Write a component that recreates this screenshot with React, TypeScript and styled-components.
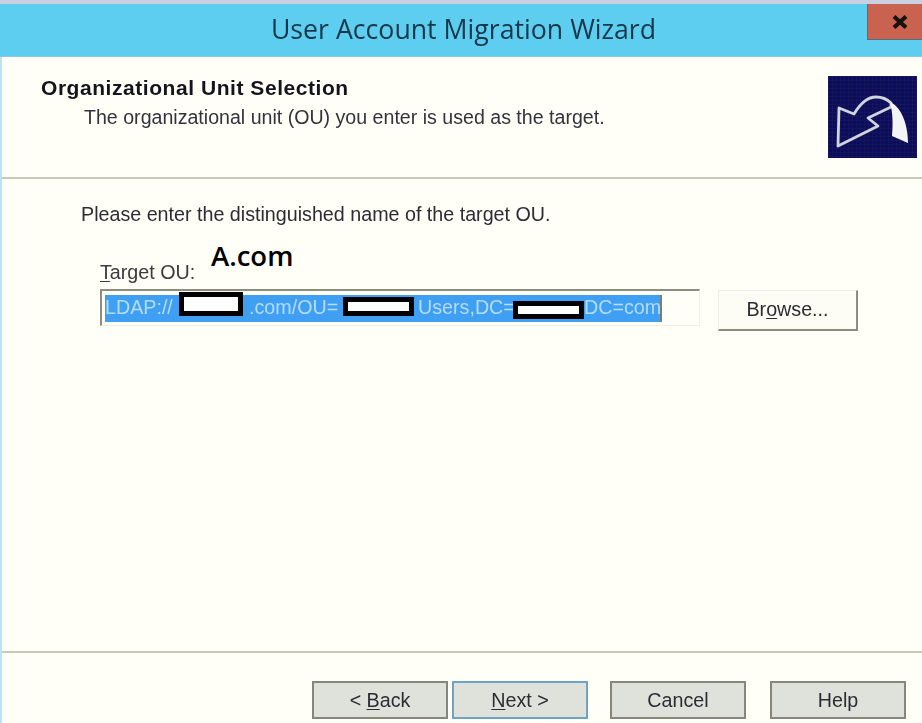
import React from "react";
import styled, { createGlobalStyle } from "styled-components";

const GlobalStyle = createGlobalStyle`
  html, body {
    margin: 0;
    padding: 0;
    background: #fffff8;
  }
  body {
    font-family: "Liberation Sans", Arial, sans-serif;
  }
`;

const Window = styled.div`
  width: 922px;
  height: 723px;
  display: flex;
  flex-direction: column;
  overflow: hidden;
  background: #fffff8;
  box-sizing: border-box;
  border-top: 4px solid #c9d0e2;
`;

const TitleBar = styled.div`
  position: relative;
  flex: 0 0 53px;
  display: flex;
  justify-content: center;
  align-items: center;
  background: #5ecef0;
  border-bottom: 1px solid #8fc6d8;
  box-sizing: border-box;
`;

const Title = styled.div`
  font-family: "Open Sans", sans-serif;
  font-size: 26.7px;
  color: #17374a;
  padding: 0 0 3px 5px;
  filter: blur(0.4px);
`;

const CloseButton = styled.div`
  position: absolute;
  top: 0;
  right: 0;
  width: 55px;
  height: 36px;
  display: flex;
  justify-content: center;
  align-items: center;
  padding-left: 10px;
  background: #c9624f;
  border-left: 1px solid #55707a;
  border-bottom: 1px solid #55707a;
  box-sizing: border-box;
`;

const Content = styled.div`
  flex: 1;
  display: flex;
  flex-direction: column;
  border-left: 2px solid #b8e4f4;
`;

const Header = styled.div`
  flex: 0 0 122px;
  display: flex;
  justify-content: space-between;
  box-sizing: border-box;
  padding: 19px 5px 0 39px;
  border-bottom: 2px solid #c8c9b9;
`;

const HeaderText = styled.div`
  display: flex;
  flex-direction: column;
`;

const Heading = styled.div`
  font-size: 21px;
  line-height: 24px;
  letter-spacing: 0.55px;
  font-weight: bold;
  color: #14141e;
  filter: blur(0.4px);
`;

const SubHeading = styled.div`
  font-size: 19.6px;
  line-height: 24px;
  margin-left: 43px;
  margin-top: 5px;
  color: #33333c;
  filter: blur(0.4px);
`;

const Emblem = styled.svg`
  width: 89px;
  height: 82px;
  display: block;
  filter: blur(0.4px);
`;

const Body = styled.div`
  flex: 1;
  display: flex;
  flex-direction: column;
  box-sizing: border-box;
  padding: 23px 0 0 79px;
`;

const Intro = styled.div`
  font-size: 19.7px;
  line-height: 24px;
  color: #2c2c34;
  filter: blur(0.4px);
`;

const Field = styled.div`
  position: relative;
  margin: 34px 0 0 19px;
`;

const FieldLabel = styled.div`
  font-size: 19.7px;
  line-height: 24px;
  color: #3a3a40;
  filter: blur(0.4px);
`;

const Underlined = styled.span`
  text-decoration: underline;
  text-underline-offset: 2px;
`;

const DomainNote = styled.div`
  position: absolute;
  left: 111px;
  top: -22px;
  font-family: "Open Sans", sans-serif;
  font-size: 27.5px;
  line-height: 36px;
  font-weight: 600;
  color: #000;
`;

const FieldRow = styled.div`
  display: flex;
  align-items: flex-start;
  margin-top: 5px;
`;

const TextBox = styled.div`
  position: relative;
  width: 600px;
  height: 37px;
  box-sizing: border-box;
  padding: 4px 0 0 3px;
  background: #fffff8;
  border: 1px solid #eeeee6;
  border-top: 2px solid #8c8c80;
  border-left: 2px solid #8c8c80;
`;

const Selection = styled.div`
  width: 557px;
  height: 27px;
  display: flex;
  box-sizing: border-box;
  background: #3f9ff2;
  border-right: 2px solid #6f7f8a;
  color: #b4dcf6;
  font-size: 19.7px;
  line-height: 25px;
  white-space: nowrap;
  filter: blur(0.3px);
`;

const Segment = styled.span<{ $width: number }>`
  flex: 0 0 ${(p) => p.$width}px;
`;

const Redaction = styled.div<{ $left: number; $top: number; $width: number; $height: number }>`
  position: absolute;
  left: ${(p) => p.$left}px;
  top: ${(p) => p.$top}px;
  width: ${(p) => p.$width}px;
  height: ${(p) => p.$height}px;
  box-sizing: border-box;
  background: #fff;
  border: 5px solid #000;
`;

const BrowseButton = styled.div`
  width: 140px;
  height: 41px;
  margin: 1px 0 0 18px;
  display: flex;
  justify-content: center;
  align-items: center;
  box-sizing: border-box;
  padding-bottom: 2px;
  background: #fdfdf6;
  border: 1px solid #eeeee6;
  border-right: 2px solid #8c8c80;
  border-bottom: 2px solid #8c8c80;
  font-size: 19.7px;
  color: #2c2c34;
`;

const ButtonLabel = styled.span`
  filter: blur(0.4px);
`;

const Footer = styled.div`
  flex: 0 0 72px;
  display: flex;
  justify-content: flex-start;
  box-sizing: border-box;
  padding: 28px 0 0 310px;
  border-top: 2px solid #c8c9b9;
`;

const WizardButton = styled.div<{ $focused?: boolean; $gap: number }>`
  width: 136px;
  height: 38px;
  margin-left: ${(p) => p.$gap}px;
  display: flex;
  justify-content: center;
  align-items: center;
  box-sizing: border-box;
  background: #dfe1db;
  border: 2px solid ${(p) => (p.$focused ? "#6fa3c4" : "#85867c")};
  font-size: 19.7px;
  color: #2c2c34;
`;

const segments = [
  { text: "LDAP://", width: 144 },
  { text: ".com/OU=", width: 169 },
  { text: "Users,DC=", width: 166 },
  { text: "DC=com", width: 76 },
];

const redactions = [
  { left: 77, top: 1, width: 64, height: 24 },
  { left: 241, top: 6, width: 71, height: 19 },
  { left: 411, top: 10, width: 71, height: 18 },
];

export default function App() {
  return (
    <>
      <GlobalStyle />
      <Window>
        <TitleBar>
          <Title>User Account Migration Wizard</Title>
          <CloseButton>
            <svg width="16" height="14" viewBox="0 0 16 14">
              <path d="M2 1.5 L14 12.5 M14 1.5 L2 12.5" stroke="#14110f" strokeWidth="4" />
            </svg>
          </CloseButton>
        </TitleBar>
        <Content>
          <Header>
            <HeaderText>
              <Heading>Organizational Unit Selection</Heading>
              <SubHeading>The organizational unit (OU) you enter is used as the target.</SubHeading>
            </HeaderText>
            <Emblem viewBox="0 0 89 82">
              <defs>
                <pattern id="dots" width="4" height="4" patternUnits="userSpaceOnUse">
                  <rect width="4" height="4" fill="#0b0b62" />
                  <rect width="1" height="4" fill="#15155a" />
                  <rect width="4" height="1" fill="#15155a" />
                </pattern>
              </defs>
              <rect width="89" height="82" fill="url(#dots)" />
              <path
                d="M10 70 L11 32 L26 38 C32 28 40 21 48 21 C54 21 59 23 63 27 L63 31 L40 42 L50 50 Z"
                fill="none"
                stroke="#d0d4de"
                strokeWidth="2.8"
                strokeLinejoin="round"
              />
              <path d="M62 26 C72 30 80 46 80 67 L64 60 C65 48 65 38 62 26 Z" fill="#f4f4f6" />
            </Emblem>
          </Header>
          <Body>
            <Intro>Please enter the distinguished name of the target OU.</Intro>
            <Field>
              <FieldLabel>
                <Underlined>T</Underlined>arget OU:
              </FieldLabel>
              <DomainNote>A.com</DomainNote>
              <FieldRow>
                <TextBox>
                  <Selection>
                    {segments.map((s) => (
                      <Segment key={s.text} $width={s.width}>
                        {s.text}
                      </Segment>
                    ))}
                  </Selection>
                  {redactions.map((r) => (
                    <Redaction key={r.left} $left={r.left} $top={r.top} $width={r.width} $height={r.height} />
                  ))}
                </TextBox>
                <BrowseButton>
                  <ButtonLabel>
                    Br<Underlined>o</Underlined>wse...
                  </ButtonLabel>
                </BrowseButton>
              </FieldRow>
            </Field>
          </Body>
          <Footer>
            <WizardButton $gap={0}>
              <ButtonLabel>
                &lt; <Underlined>B</Underlined>ack
              </ButtonLabel>
            </WizardButton>
            <WizardButton $gap={4} $focused>
              <ButtonLabel>
                <Underlined>N</Underlined>ext &gt;
              </ButtonLabel>
            </WizardButton>
            <WizardButton $gap={22}>
              <ButtonLabel>Cancel</ButtonLabel>
            </WizardButton>
            <WizardButton $gap={24}>
              <ButtonLabel>Help</ButtonLabel>
            </WizardButton>
          </Footer>
        </Content>
      </Window>
    </>
  );
}
